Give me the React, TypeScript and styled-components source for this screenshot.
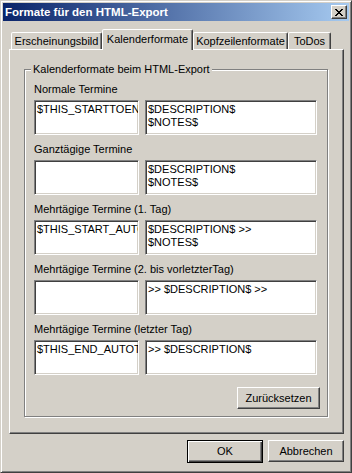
import styled, { createGlobalStyle } from "styled-components";

const GlobalStyle = createGlobalStyle`
    html, body {
        margin: 0;
        padding: 0;
        background: #D4D0C8;
    }
    body {
        font-family: "Liberation Sans", Arial, sans-serif;
        font-size: 11px;
        color: #000000;
    }
`;

const Window = styled.div`
    width: 352px;
    height: 473px;
    box-sizing: border-box;
    border: 1px solid;
    border-color: #D4D0C8 #404040 #404040 #D4D0C8;
    box-shadow: inset 1px 1px #ffffff, inset -1px -1px #808080;
    padding: 2px;
    background: #D4D0C8;
    display: flex;
    flex-direction: column;
`;

const TitleBar = styled.div`
    height: 18px;
    display: flex;
    align-items: center;
    justify-content: space-between;
    padding: 0 2px;
    background: linear-gradient(to right, #0A246A, #A6CAF0);
    color: #ffffff;
    font-weight: bold;
    font-size: 11.5px;
`;

const CloseButton = styled.div`
    width: 16px;
    height: 14px;
    box-sizing: border-box;
    background: #D4D0C8;
    border: 1px solid;
    border-color: #ffffff #404040 #404040 #ffffff;
    box-shadow: inset -1px -1px #808080;
    display: flex;
    align-items: center;
    justify-content: center;
    padding-right: 1px;
`;

const Body = styled.div`
    padding: 8px 5px 0 6px;
`;

const TabRow = styled.div`
    display: flex;
    align-items: flex-end;
    height: 20px;
    padding-left: 2px;
`;

const Tab = styled.div<{ $w: number; $active?: boolean }>`
    width: ${(p) => p.$w}px;
    height: ${(p) => (p.$active ? 21 : 17)}px;
    box-sizing: border-box;
    border: 1px solid;
    border-bottom: none;
    border-color: #ffffff #404040 transparent #ffffff;
    border-radius: 2px 2px 0 0;
    box-shadow: inset -1px 0 #808080;
    background: #D4D0C8;
    text-align: center;
    line-height: 13px;
    white-space: nowrap;
    padding-top: ${(p) => (p.$active ? 3 : 2)}px;
    margin-bottom: ${(p) => (p.$active ? -1 : 0)}px;
    position: relative;
    z-index: ${(p) => (p.$active ? 1 : 0)};
`;

const Panel = styled.div`
    border: 1px solid;
    border-color: #ffffff #404040 #404040 #ffffff;
    box-shadow: inset -1px -1px #808080;
    padding: 13px 15px 16px 14px;
`;

const Group = styled.fieldset`
    margin: 0;
    min-width: 0;
    border: 1px solid #808080;
    box-shadow: 1px 1px 0 #ffffff, inset 1px 1px 0 #ffffff;
    padding: 7px 10px 7px 9px;
    display: flex;
    flex-direction: column;
`;

const Legend = styled.legend`
    padding: 0 2px;
    margin-left: -3px;
    line-height: 13px;
    background: #D4D0C8;
`;

const Section = styled.div`
    display: flex;
    flex-direction: column;
    & + & {
        margin-top: 8px;
    }
`;

const Label = styled.div`
    line-height: 13px;
    margin-bottom: 4px;
    white-space: nowrap;
`;

const Fields = styled.div`
    display: grid;
    grid-template-columns: 105px 172px;
    gap: 6px;
`;

const Field = styled.div`
    height: 35px;
    box-sizing: border-box;
    background: #ffffff;
    border: 1px solid;
    border-color: #808080 #ffffff #ffffff #808080;
    box-shadow: inset 1px 1px #404040, inset -1px -1px #D4D0C8;
    padding: 2px 2px;
    line-height: 13px;
    white-space: pre;
    overflow: hidden;
`;

const Button = styled.div<{ $w: number; $default?: boolean }>`
    width: ${(p) => p.$w}px;
    height: ${(p) => (p.$default ? 23 : 22)}px;
    box-sizing: border-box;
    background: #D4D0C8;
    border: 1px solid;
    border-color: ${(p) => (p.$default ? "#000000" : "#ffffff #404040 #404040 #ffffff")};
    box-shadow: ${(p) =>
        p.$default
            ? "inset 1px 1px #ffffff, inset -1px -1px #404040, inset -2px -2px #808080"
            : "inset -1px -1px #808080"};
    display: flex;
    align-items: center;
    justify-content: center;
    line-height: 13px;
`;

const ResetRow = styled.div`
    display: flex;
    justify-content: flex-end;
    margin: 12px -3px 0 0;
`;

const Footer = styled.div`
    display: flex;
    justify-content: flex-end;
    gap: 5px;
    margin-top: 6px;
`;

const rows = [
    { label: "Normale Termine", left: "$THIS_STARTTOEND$", right: "$DESCRIPTION$\n$NOTES$" },
    { label: "Ganztägige Termine", left: "", right: "$DESCRIPTION$\n$NOTES$" },
    { label: "Mehrtägige Termine (1. Tag)", left: "$THIS_START_AUTOTIME$", right: "$DESCRIPTION$ >>\n$NOTES$" },
    { label: "Mehrtägige Termine (2. bis vorletzterTag)", left: "", right: ">> $DESCRIPTION$ >>" },
    { label: "Mehrtägige Termine (letzter Tag)", left: "$THIS_END_AUTOTIME$", right: ">> $DESCRIPTION$" },
];

const CloseGlyph = () => (
    <svg width="8" height="7" viewBox="0 0 8 7" shapeRendering="crispEdges">
        <path
            d="M0 0h2v1H0zM6 0h2v1H6zM1 1h2v1H1zM5 1h2v1H5zM2 2h4v1H2zM3 3h2v1H3zM2 4h4v1H2zM1 5h2v1H1zM5 5h2v1H5zM0 6h2v1H0zM6 6h2v1H6z"
            fill="#000000"
        />
    </svg>
);

const App = () => {
    return (
        <Window>
            <GlobalStyle />
            <TitleBar>
                <span>Formate für den HTML-Export</span>
                <CloseButton>
                    <CloseGlyph />
                </CloseButton>
            </TitleBar>
            <Body>
                <TabRow>
                    <Tab $w={91}>Erscheinungsbild</Tab>
                    <Tab $w={91} $active>Kalenderformate</Tab>
                    <Tab $w={95}>Kopfzeilenformate</Tab>
                    <Tab $w={43}>ToDos</Tab>
                </TabRow>
                <Panel>
                    <Group>
                        <Legend>Kalenderformate beim HTML-Export</Legend>
                        {rows.map((r) => (
                            <Section key={r.label}>
                                <Label>{r.label}</Label>
                                <Fields>
                                    <Field>{r.left}</Field>
                                    <Field>{r.right}</Field>
                                </Fields>
                            </Section>
                        ))}
                        <ResetRow>
                            <Button $w={83}>Zurücksetzen</Button>
                        </ResetRow>
                    </Group>
                </Panel>
                <Footer>
                    <Button $w={76} $default>OK</Button>
                    <Button $w={76}>Abbrechen</Button>
                </Footer>
            </Body>
        </Window>
    );
};

export default App;
